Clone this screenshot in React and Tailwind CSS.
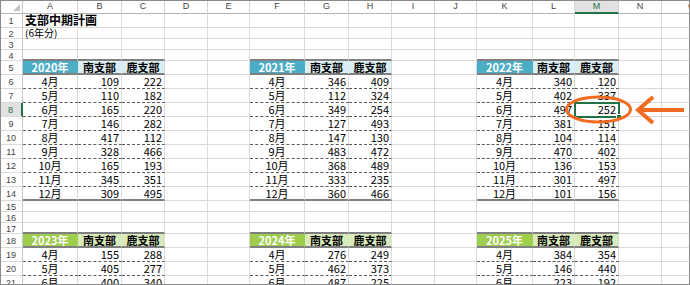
import React from 'react';

const widths = ['w-[23px]','w-[55px]','w-[44px]','w-[43px]','w-[43px]','w-[42px]','w-[55px]','w-[44px]','w-[43px]','w-[43px]','w-[42px]','w-[56px]','w-[42px]','w-[44px]','w-[43px]','w-[60px]'];
const letters = ['', 'A','B','C','D','E','F','G','H','I','J','K','L','M','N','O'];
const months = ['4月','5月','6月','7月','8月','9月','10月','11月','12月'];

const BLUE = { dark: 'bg-[#4bacc6]', light: 'bg-[#daeef3]' };
const GREEN = { dark: 'bg-[#9fcd4e]', light: 'bg-[#d8ebbb]' };

const tables = [
  { c: 1, r: 5, year: '2020年', col: BLUE, data: [[109,222],[110,182],[165,220],[146,282],[417,112],[328,466],[165,193],[345,351],[309,495]] },
  { c: 6, r: 5, year: '2021年', col: BLUE, data: [[346,409],[112,324],[349,254],[127,493],[147,130],[483,472],[368,489],[333,235],[360,466]] },
  { c: 11, r: 5, year: '2022年', col: BLUE, data: [[340,120],[402,337],[497,252],[381,151],[104,114],[470,402],[136,153],[301,497],[101,156]] },
  { c: 1, r: 18, year: '2023年', col: GREEN, data: [[155,288],[405,277],[400,340],[210,155],[301,402],[188,276],[422,130],[259,318],[174,441]] },
  { c: 6, r: 18, year: '2024年', col: GREEN, data: [[276,249],[462,373],[487,225],[133,402],[298,187],[356,264],[145,379],[410,216],[237,355]] },
  { c: 11, r: 18, year: '2025年', col: GREEN, data: [[384,354],[146,440],[223,192],[312,285],[167,433],[451,128],[289,306],[198,472],[365,241]] },
];

const rowHeight = (r) => ([2, 3, 4, 15, 16, 17].includes(r) ? 'h-[11px]' : 'h-[14px]');

const FONT = "font-['Noto_Sans_CJK_JP',sans-serif]";

function cellInfo(r, c) {
  let right = 'border-r border-r-[#dadada]';
  let bottom = 'border-b border-b-[#dadada]';
  let bg = '';
  let content = null;
  let align = 'justify-end pr-[2px]';
  let text = 'text-black';
  for (const t of tables) {
    const off = c - t.c;
    if (off < 0 || off > 2) continue;
    const k = r - t.r;
    if (k === -1) {
      bottom = 'border-b-2 border-b-[#808080]';
    } else if (k === 0) {
      bottom = 'border-b-2 border-b-[#808080]';
      if (off < 2) right = 'border-r border-r-transparent';
      bg = off === 0 ? t.col.dark : t.col.light;
      content = off === 0 ? t.year : off === 1 ? '南支部' : '鹿支部';
      align = 'justify-center';
      text = off === 0 ? 'text-white font-bold' : 'text-black font-bold';
    } else if (k >= 1 && k <= 9) {
      bottom = k === 9 ? 'border-b-2 border-b-[#808080]' : 'border-b border-b-[#5a5a5a] [border-bottom-style:dashed]';
      if (off === 0) {
        content = months[k - 1];
        align = 'justify-center';
      } else {
        content = t.data[k - 1][off - 1];
      }
    }
  }
  return { right, bottom, bg, content, align, text };
}

function HeaderRow() {
  return (
    <div className="flex h-[14px] bg-white">
      {widths.map((w, c) => {
        if (c === 0) {
          return (
            <div key={c} className={`${w} shrink-0 relative border-r border-r-[#c6c6c6] border-b border-b-[#b5b5b5]`}>
              <svg className="absolute right-[2px] bottom-[2px]" width="7" height="7" viewBox="0 0 7 7">
                <polygon points="7,0 7,7 0,7" fill="#c4c4c4" />
              </svg>
            </div>
          );
        }
        const sel = c === 13;
        return (
          <div
            key={c}
            className={`${w} shrink-0 flex items-center justify-center text-[9px] leading-none font-['Liberation_Sans',sans-serif] border-r border-r-[#d4d4d4] ${sel ? 'bg-[#e1e1e1] border-b-2 border-b-[#217346] text-[#217346]' : 'border-b border-b-[#b5b5b5] text-[#444]'}`}
          >
            {letters[c]}
          </div>
        );
      })}
    </div>
  );
}

function BodyRow({ r }) {
  const h = rowHeight(r);
  return (
    <div className={`flex ${h}`}>
      <div
        className={`w-[23px] shrink-0 flex items-center justify-center pt-[2px] text-[9px] leading-none font-['Liberation_Sans',sans-serif] border-b border-b-[#dadada] ${r === 8 ? 'bg-[#e1e1e1] border-r-2 border-r-[#217346] text-[#217346]' : 'bg-white border-r border-r-[#c6c6c6] text-[#444]'}`}
      >
        {r}
      </div>
      {widths.slice(1).map((w, i) => {
        const c = i + 1;
        if (c === 1 && r === 1) {
          return (
            <div key={c} className={`${w} shrink-0 relative z-10 flex items-end pl-[2px] pb-[1px] border-r border-r-[#dadada] border-b border-b-[#dadada]`}>
              <span className={`whitespace-nowrap text-[12px] leading-none font-bold text-black ${FONT}`}>支部中期計画</span>
            </div>
          );
        }
        if (c === 1 && r === 2) {
          return (
            <div key={c} className={`${w} shrink-0 relative z-10 flex items-center pl-[2px] border-r border-r-[#dadada] border-b border-b-[#dadada]`}>
              <span className={`whitespace-nowrap text-[10px] leading-none text-black ${FONT}`}>(6年分)</span>
            </div>
          );
        }
        const info = cellInfo(r, c);
        return (
          <div
            key={c}
            className={`${w} shrink-0 flex items-center ${info.align} ${info.right} ${info.bottom} ${info.bg} ${info.text} text-[11px] leading-none ${FONT}`}
          >
            {info.content}
          </div>
        );
      })}
    </div>
  );
}

export default function App() {
  const rows = [];
  for (let r = 1; r <= 21; r++) rows.push(r);
  return (
    <div className="relative w-[690px] h-[285px] overflow-hidden bg-white">
      <HeaderRow />
      {rows.map((r) => (
        <BodyRow key={r} r={r} />
      ))}
      {/* selected cell */}
      <div className="absolute left-[574px] top-[102px] w-[46px] h-[16px] border-2 border-[#217346] pointer-events-none" />
      <div className="absolute left-[616px] top-[114px] w-[6px] h-[6px] bg-[#217346] border border-white pointer-events-none" />
      {/* annotation */}
      <svg className="absolute left-0 top-0 pointer-events-none" width="690" height="285" viewBox="0 0 690 285">
        <ellipse cx="598.5" cy="109.5" rx="32" ry="12.5" fill="none" stroke="#f26b21" strokeWidth="3" />
        <line x1="639" y1="110" x2="684" y2="110" stroke="#f26b21" strokeWidth="4" />
        <polyline points="653,97 638,110 653,123" fill="none" stroke="#f26b21" strokeWidth="4" strokeLinejoin="miter" />
      </svg>
      <div className="absolute inset-0 border border-[#8a8a8a] pointer-events-none" />
    </div>
  );
}
